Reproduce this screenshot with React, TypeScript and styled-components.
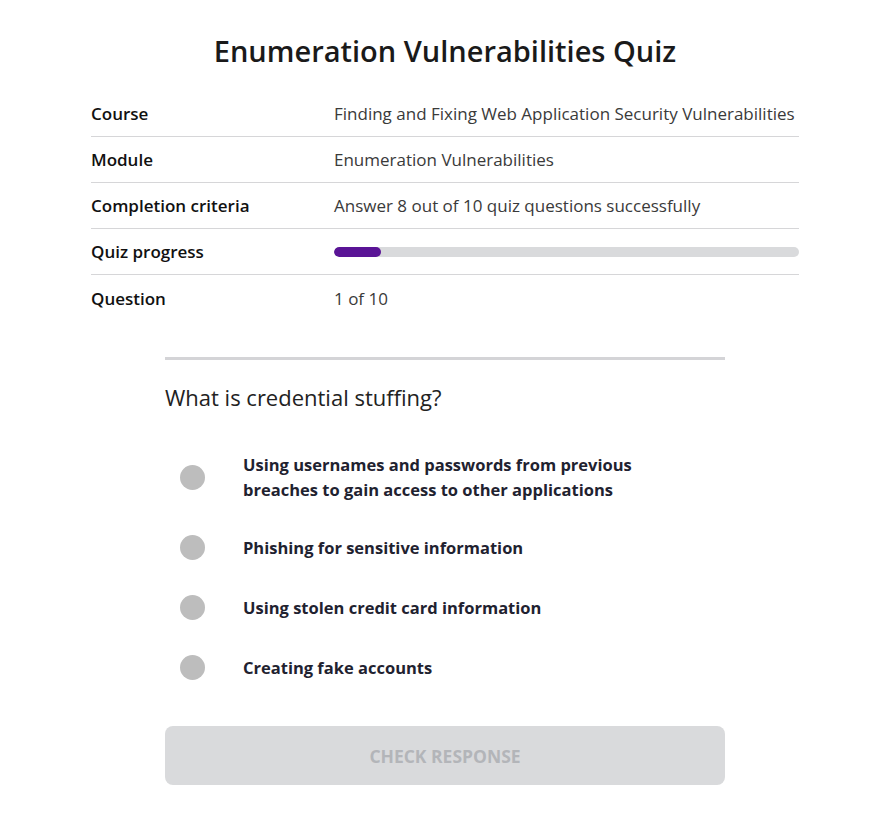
import React from 'react'
import styled, { createGlobalStyle } from 'styled-components'

const GlobalStyle = createGlobalStyle`
  body {
    margin: 0;
    background: #fff;
    font-family: 'Open Sans', 'Noto Sans', sans-serif;
  }
`

interface InfoRow {
  label: string
  value?: string
  progress?: number
}

const rows: InfoRow[] = [
  { label: 'Course', value: 'Finding and Fixing Web Application Security Vulnerabilities' },
  { label: 'Module', value: 'Enumeration Vulnerabilities' },
  { label: 'Completion criteria', value: 'Answer 8 out of 10 quiz questions successfully' },
  { label: 'Quiz progress', progress: 10 },
  { label: 'Question', value: '1 of 10' },
]

const options = [
  'Using usernames and passwords from previous breaches to gain access to other applications',
  'Phishing for sensitive information',
  'Using stolen credit card information',
  'Creating fake accounts',
]

const App = (): React.ReactElement => {
  return (
    <Page>
      <GlobalStyle />
      <Container>
        <Title>Enumeration Vulnerabilities Quiz</Title>

        <InfoTable>
          {rows.map((row) => (
            <Row key={row.label}>
              <Label>{row.label}</Label>
              {row.progress !== undefined ? (
                <Track>
                  <Fill style={{ width: `${row.progress}%` }} />
                </Track>
              ) : (
                <Value>{row.value}</Value>
              )}
            </Row>
          ))}
        </InfoTable>

        <QuizSection>
          <Question>What is credential stuffing?</Question>
          <Options>
            {options.map((text) => (
              <Option key={text}>
                <Radio />
                <OptionText>{text}</OptionText>
              </Option>
            ))}
          </Options>
          <CheckButton disabled>CHECK RESPONSE</CheckButton>
        </QuizSection>
      </Container>
    </Page>
  )
}

const Page = styled.div`
  padding: 36px 0 40px 14px;
`

const Container = styled.div`
  width: 708px;
  margin: 0 auto;
  display: flex;
  flex-direction: column;
  align-items: center;
`

const Title = styled.h1`
  margin: 0 0 25px 0;
  font-size: 29px;
  font-weight: 600;
  color: #1a1a1a;
  line-height: 30px;
  text-align: center;
`

const InfoTable = styled.div`
  width: 100%;
  display: flex;
  flex-direction: column;
`

const Row = styled.div`
  box-sizing: border-box;
  display: grid;
  grid-template-columns: 243px 1fr;
  align-items: center;
  height: 46px;
  border-bottom: 1px solid #d6d6d8;

  &:last-child {
    border-bottom: none;
  }
`

const Label = styled.span`
  font-size: 17px;
  font-weight: 600;
  color: #111;
`

const Value = styled.span`
  font-size: 17px;
  color: #3a3a3a;
  white-space: nowrap;
`

const Track = styled.div`
  height: 10px;
  border-radius: 5px;
  background: #d9dadc;
  overflow: hidden;
`

const Fill = styled.div`
  height: 100%;
  border-radius: 5px;
  background: #5a1496;
`

const QuizSection = styled.div`
  width: 560px;
  margin-top: 36px;
  border-top: 3px solid #d4d4d7;
  display: flex;
  flex-direction: column;
`

const Question = styled.h2`
  margin: 22px 0 0 0;
  font-size: 22px;
  font-weight: 400;
  color: #222;
  line-height: 30px;
`

const Options = styled.div`
  display: flex;
  flex-direction: column;
  gap: 30px;
  margin-top: 40px;
  padding-left: 15px;
`

const Option = styled.label`
  display: flex;
  align-items: center;
  gap: 38px;
  min-height: 30px;
  cursor: pointer;
`

const Radio = styled.span`
  flex: none;
  width: 25px;
  height: 25px;
  border-radius: 50%;
  background: #bdbdbd;
`

const OptionText = styled.span`
  max-width: 410px;
  font-size: 16.5px;
  font-weight: 700;
  line-height: 25px;
  color: #1f2230;
`

const CheckButton = styled.button`
  margin-top: 44px;
  height: 59px;
  width: 100%;
  border: none;
  border-radius: 8px;
  background: #d9dadc;
  color: #b3b5b9;
  font-family: inherit;
  font-size: 17.5px;
  font-weight: 700;
`

export default App
